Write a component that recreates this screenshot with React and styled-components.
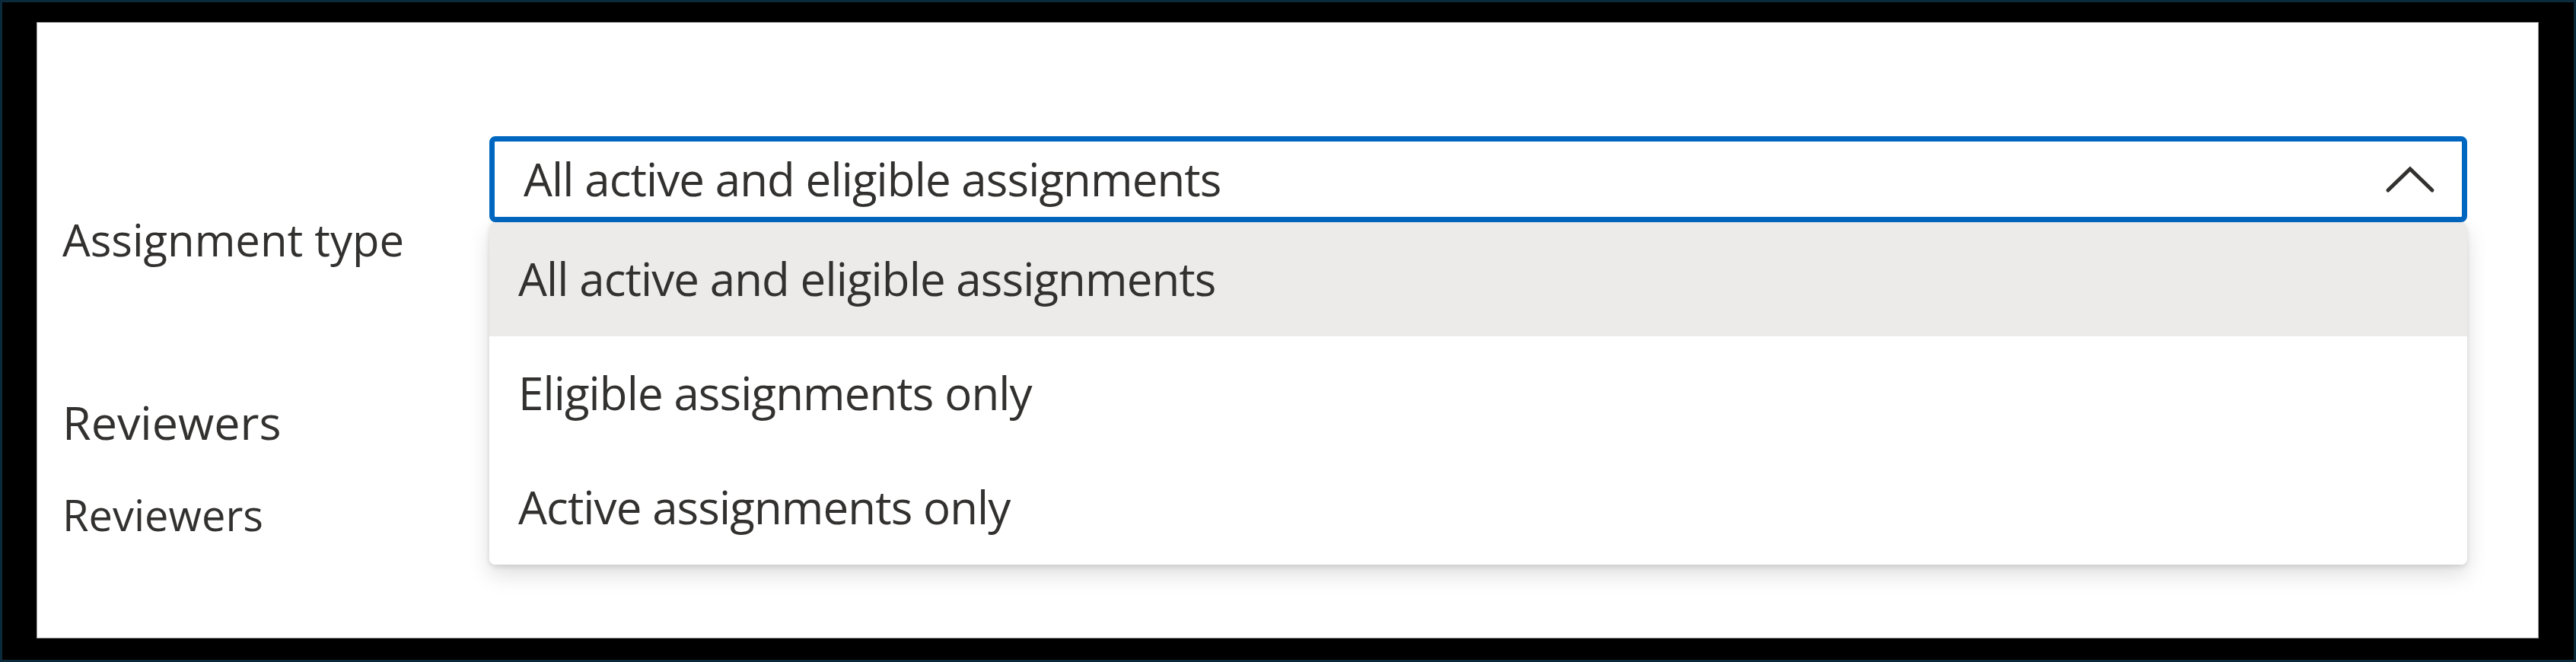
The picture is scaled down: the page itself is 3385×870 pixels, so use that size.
import React from 'react';
import styled, { createGlobalStyle } from 'styled-components';

const GlobalStyle = createGlobalStyle`
  html, body { margin: 0; padding: 0; background: #0b2a3b; }
  body { font-family: "Open Sans", "Noto Sans", sans-serif; color: #323130; }
  * { box-sizing: border-box; }
`;

const Frame = styled.div`
  margin: 3px;
  height: 864px;
  background: #000;
  padding: 26px 46px 28px 45px;
`;

const Panel = styled.div`
  height: 100%;
  background: #fff;
  border: 1px solid #a3a3a3;
  padding: 149px 0 0 33px;
  display: flex;
  flex-direction: column;
`;

const FieldRow = styled.div`
  display: grid;
  grid-template-columns: 561px 2599px;
  align-items: start;
`;

const Label = styled.div`
  font-size: ${p => p.$size}px;
  line-height: 1.362;
  margin-top: ${p => p.$top}px;
  color: #323130;
  white-space: nowrap;
`;

const Dropdown = styled.div`
  position: relative;
`;

const Box = styled.div`
  height: 113px;
  border: 7px solid #0067c0;
  border-radius: 8px;
  padding: 0 35px 0 38px;
  display: flex;
  align-items: center;
  justify-content: space-between;
  background: #fff;
`;

const Value = styled.span`
  font-size: 60px;
  line-height: 1.362;
  letter-spacing: -0.9px;
  color: #323130;
`;

const Menu = styled.div`
  position: absolute;
  top: 100%;
  left: 0;
  width: 100%;
  background: #fff;
  border-radius: 8px;
  overflow: hidden;
  box-shadow: 0 13px 29px rgba(0, 0, 0, 0.132), 0 2.4px 7.2px rgba(0, 0, 0, 0.108);
  z-index: 2;
`;

const Option = styled.div`
  height: 150px;
  display: flex;
  align-items: center;
  padding-left: 38px;
  font-size: 60px;
  line-height: 1.362;
  letter-spacing: -0.9px;
  color: #323130;
  background: ${p => (p.$active ? '#edebe9' : '#fff')};
`;

const Chevron = () => (
  <svg width="66" height="38" viewBox="0 0 66 38" fill="none">
    <polyline
      points="4,33 33,5 62,33"
      stroke="#323130"
      strokeWidth="5"
      strokeLinecap="round"
      strokeLinejoin="miter"
    />
  </svg>
);

const options = [
  'All active and eligible assignments',
  'Eligible assignments only',
  'Active assignments only',
];

export default function App() {
  return (
    <>
      <GlobalStyle />
      <Frame>
        <Panel>
          <FieldRow>
            <Label $size={58} $top={96}>Assignment type</Label>
            <Dropdown>
              <Box>
                <Value>All active and eligible assignments</Value>
                <Chevron />
              </Box>
              <Menu>
                {options.map((o, i) => (
                  <Option key={o} $active={i === 0}>{o}</Option>
                ))}
              </Menu>
            </Dropdown>
          </FieldRow>
          <Label $size={61} $top={159}>Reviewers</Label>
          <Label $size={56} $top={42}>Reviewers</Label>
        </Panel>
      </Frame>
    </>
  );
}
